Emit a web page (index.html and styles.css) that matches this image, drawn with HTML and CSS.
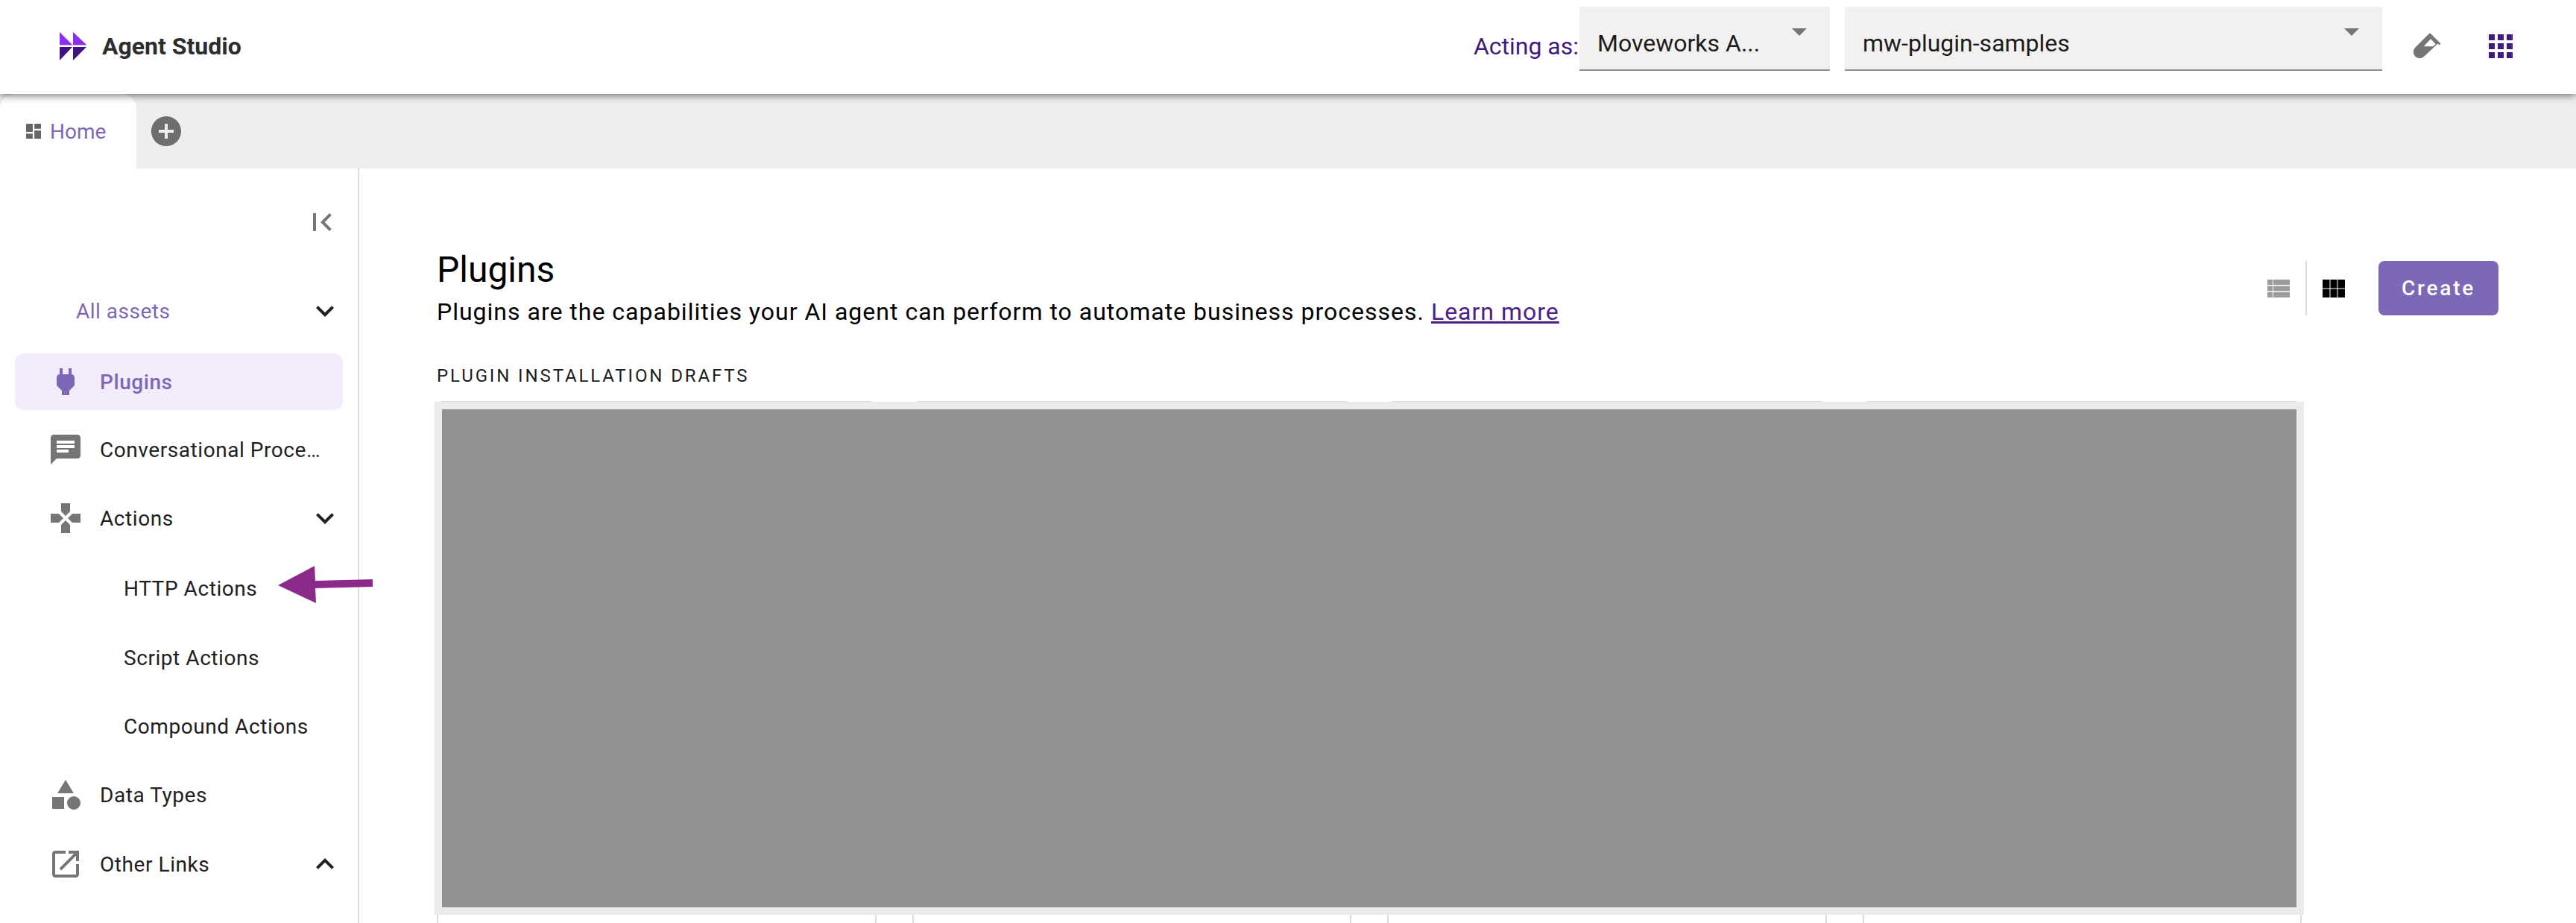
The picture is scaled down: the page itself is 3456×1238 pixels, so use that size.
FILE: index.html
```html
<!DOCTYPE html>
<html lang="en">
<head>
    <meta charset="UTF-8">
    <meta name="viewport" content="width=device-width, initial-scale=1.0">
    <title>Agent Studio</title>
    <link rel="stylesheet" href="styles.css">
</head>
<body>
    <!-- Top bar -->
    <header class="topbar">
        <div class="brand">
            <svg class="brand-logo" viewBox="0 0 36 38">
                <path fill="#8a2eef" d="M0 0l17 17H0zM18 0l18 17H18z"/>
                <path fill="#c9a6f7" d="M0 17h36v1H0z"/>
                <path fill="#3f1480" d="M0 20h17L0 38zM18 20h18L18 38z"/>
            </svg>
            <span class="brand-name">Agent Studio</span>
        </div>
        <div class="topbar-right">
            <span class="acting-label">Acting as:</span>
            <div class="select select-org">
                <span>Moveworks A...</span>
                <svg class="select-arrow" viewBox="0 0 20 10"><path d="M0 0h20L10 10z"/></svg>
            </div>
            <div class="select select-workspace">
                <span>mw-plugin-samples</span>
                <svg class="select-arrow" viewBox="0 0 20 10"><path d="M0 0h20L10 10z"/></svg>
            </div>
            <svg class="tube-icon" viewBox="0 0 38 38">
                <path fill="#757575" d="M23.500.5l14 14-2 2-2-2L15 32a8.500 8.500 0 0 1-12-12L21.500 1.500z"/>
                <path fill="#fff" d="M14.700 18.300L24 8.300l6.700 6.700-3.400 3.300z"/>
            </svg>
            <svg class="apps-icon" viewBox="0 0 32 32">
                <path fill="#3f1a80" d="M0 0h8v8H0zM12 0h8v8h-8zM24 0h8v8h-8zM0 12h8v8H0zM12 12h8v8h-8zM24 12h8v8h-8zM0 24h8v8H0zM12 24h8v8h-8zM24 24h8v8h-8z"/>
            </svg>
        </div>
    </header>

    <!-- Tabs -->
    <div class="tabbar">
        <div class="tab">
            <svg class="tab-icon" viewBox="3 3 18 18"><path d="M3 13h8V3H3v10zm0 8h8v-6H3v6zm10 0h8V11h-8v10zm0-18v6h8V3h-8z"/></svg>
            <span>Home</span>
        </div>
        <svg class="add-tab" viewBox="2 2 20 20"><path d="M12 2C6.480 2 2 6.480 2 12s4.480 10 10 10 10-4.480 10-10S17.520 2 12 2zm5 11h-4v4h-2v-4H7v-2h4V7h2v4h4v2z"/></svg>
    </div>

    <div class="layout">
        <!-- Sidebar -->
        <aside class="sidebar">
            <div class="collapse-row">
                <svg class="icon" viewBox="0 0 24 24"><path d="M18.410 16.590L13.820 12l4.590-4.590L17 6l-6 6 6 6zM6 6h2v12H6z"/></svg>
            </div>
            <div class="assets-row">
                <span>All assets</span>
                <svg class="chevron" viewBox="0 0 24 24"><path d="M16.590 8.590L12 13.170 7.410 8.590 6 10l6 6 6-6z"/></svg>
            </div>
            <nav>
                <div class="nav-row">
                    <div class="nav-item active">
                        <svg class="icon" viewBox="0 0 24 24"><path d="M16.010 7L16 3h-2v4h-4V3H8v4h-.01C7 6.990 6 7.990 6 8.990v5.490L9.500 18v3h5v-3l3.500-3.510v-5.500c0-1-1-2-1.990-1.990z"/></svg>
                        <span class="nav-text">Plugins</span>
                    </div>
                </div>
                <div class="nav-row short">
                    <div class="nav-item">
                        <svg class="icon" viewBox="0 0 24 24"><path d="M20 2H4c-1.100 0-1.990.9-1.990 2L2 22l4-4h14c1.100 0 2-.9 2-2V4c0-1.100-.9-2-2-2zM6 9h12v2H6V9zm8 5H6v-2h8v2zm4-6H6V6h12v2z"/></svg>
                        <span class="nav-text">Conversational Proce…</span>
                    </div>
                </div>
                <div class="nav-row tall">
                    <div class="nav-item">
                        <svg class="icon" viewBox="0 0 24 24"><path d="M15 7.500V2H9v5.500l3 3 3-3zM7.500 9H2v6h5.500l3-3-3-3zM9 16.500V22h6v-5.500l-3-3-3 3zM16.500 9l-3 3 3 3H22V9h-5.500z"/></svg>
                        <span class="nav-text">Actions</span>
                        <svg class="chevron" viewBox="0 0 24 24"><path d="M16.590 8.590L12 13.170 7.410 8.590 6 10l6 6 6-6z"/></svg>
                    </div>
                </div>
                <div class="nav-row tall"><div class="nav-item sub"><span class="nav-text">HTTP Actions</span></div></div>
                <div class="nav-row"><div class="nav-item sub"><span class="nav-text">Script Actions</span></div></div>
                <div class="nav-row"><div class="nav-item sub"><span class="nav-text">Compound Actions</span></div></div>
                <div class="nav-row">
                    <div class="nav-item">
                        <svg class="icon" viewBox="0 0 24 24"><path d="M12 2l-5.500 9h11zM3 13.500h8v8H3z"/><circle cx="17.500" cy="17.500" r="4.500"/></svg>
                        <span class="nav-text">Data Types</span>
                    </div>
                </div>
                <div class="nav-row tall">
                    <div class="nav-item">
                        <svg class="icon" viewBox="0 0 24 24"><path d="M19 19H5V5h7V3H5c-1.110 0-2 .9-2 2v14c0 1.100.89 2 2 2h14c1.100 0 2-.9 2-2v-7h-2v7zM14 3v2h3.590l-9.830 9.830 1.410 1.410L19 6.410V10h2V3h-7z"/></svg>
                        <span class="nav-text">Other Links</span>
                        <svg class="chevron" viewBox="0 0 24 24"><path d="M12 8l-6 6 1.410 1.410L12 10.830l4.590 4.580L18 14z"/></svg>
                    </div>
                </div>
            </nav>
            <!-- Callout arrow from the docs screenshot -->
            <svg class="callout-arrow" viewBox="0 0 127 50">
                <path fill="#8b2a8b" d="M0 26L49 0l1 20 77-2v10l-77 2 1 20z"/>
            </svg>
        </aside>

        <!-- Main content -->
        <main class="content">
            <div class="content-head">
                <div>
                    <h1 class="page-title">Plugins</h1>
                    <p class="page-desc">Plugins are the capabilities your AI agent can perform to automate business processes. <a href="#">Learn more</a></p>
                </div>
                <div class="head-actions">
                    <svg class="view-icon" viewBox="0 0 30 24">
                        <path fill="#9b9b9b" d="M0 0h7v7H0zM8 0h22v7H8zM0 8.500h7v7H0zM8 8.500h22v7H8zM0 17h7v7H0zM8 17h22v7H8z"/>
                    </svg>
                    <span class="view-divider"></span>
                    <svg class="view-icon" viewBox="0 0 30 24">
                        <path d="M0 0h9.500v11.500H0zM10.500 0h9v11.500h-9zM20.500 0H30v11.500h-9.500zM0 12.500h9.500V24H0zM10.500 12.500h9V24h-9zM20.500 12.500H30V24h-9.500z"/>
                    </svg>
                    <button class="create-btn">Create</button>
                </div>
            </div>
            <h2 class="section-label">PLUGIN INSTALLATION DRAFTS</h2>
            <div class="drafts">
                <div class="draft-card"></div>
                <div class="draft-card"></div>
                <div class="draft-card"></div>
                <div class="draft-card"></div>
                <!-- Redacted block over the cards -->
                <div class="drafts-cover"><div class="drafts-fill"></div></div>
            </div>
        </main>
    </div>
</body>
</html>
```

FILE: styles.css
```css
html, body {
    margin: 0;
    height: 1238px;
    overflow: hidden;
    background-color: white;
    font-family: Roboto, Arial, sans-serif;
}

/* Top bar */
.topbar {
    position: relative;
    z-index: 2;
    height: 126px;
    box-sizing: border-box;
    padding: 9px 85px 0 80px;
    display: flex;
    justify-content: space-between;
    background-color: white;
    box-shadow: 0 2px 10px rgba(0, 0, 0, 0.55);
}

.brand {
    display: flex;
    align-items: center;
    height: 124px;
    margin-top: -9px;
}

.brand-logo {
    width: 36px;
    height: 38px;
    margin-right: 21px;
}

.brand-name {
    font-size: 32px;
    font-weight: 700;
    color: #2d2d2d;
}

.topbar-right {
    display: flex;
    align-items: flex-start;
}

.acting-label {
    font-size: 32px;
    color: #3f1a80;
    line-height: 86px;
    margin-right: 1px;
    padding-top: 10px;
}

.select {
    height: 86px;
    box-sizing: border-box;
    padding: 0 31px 0 24px;
    display: flex;
    align-items: center;
    justify-content: space-between;
    background-color: #f2f1ef;
    border-bottom: 2px solid #8e8e8e;
    font-size: 32px;
    color: #1c1c1c;
}

.select span {
    margin-top: 13px;
}

.select-org {
    width: 336px;
    margin-right: 20px;
}

.select-workspace {
    width: 721px;
}

.select-arrow {
    width: 20px;
    height: 10px;
    margin-top: -16px;
    fill: #757575;
}

.tube-icon {
    width: 38px;
    height: 38px;
    margin: 35px 0 0 41px;
}

.apps-icon {
    width: 32px;
    height: 32px;
    margin: 37px 0 0 64px;
}

/* Tabs */
.tabbar {
    height: 100px;
    display: flex;
    align-items: center;
    background-color: #eeeeee;
}

.tab {
    width: 183px;
    height: 100px;
    box-sizing: border-box;
    padding-left: 35px;
    display: flex;
    align-items: center;
    gap: 12px;
    background-color: white;
    border-radius: 20px 20px 0 0;
    font-size: 28px;
    color: #7d68b7;
}

.tab-icon {
    width: 20px;
    height: 20px;
    fill: #666666;
}

.add-tab {
    width: 40px;
    height: 40px;
    margin-left: 20px;
    fill: #6e6e6e;
}

/* Page layout */
.layout {
    display: flex;
    height: 1012px;
    overflow: hidden;
}

.sidebar {
    position: relative;
    width: 482px;
    flex-shrink: 0;
    box-sizing: border-box;
    border-right: 2px solid #dddddd;
}

.icon {
    width: 48px;
    height: 48px;
    flex-shrink: 0;
    fill: #757575;
}

.chevron {
    width: 48px;
    height: 48px;
    flex-shrink: 0;
    fill: #212121;
}

.collapse-row {
    height: 94px;
    padding: 48px 24px 0 0;
    box-sizing: border-box;
    display: flex;
    justify-content: flex-end;
}

.assets-row {
    height: 146px;
    box-sizing: border-box;
    padding: 48px 20px 0 102px;
    display: flex;
    align-items: center;
    justify-content: space-between;
    font-size: 28px;
    letter-spacing: 0.5px;
    color: #7d68b7;
}

.nav-row {
    height: 92px;
    padding: 8px 20px;
    box-sizing: border-box;
    display: flex;
}

.nav-row.short {
    height: 90px;
}

.nav-row.tall {
    height: 94px;
}

.nav-item {
    flex: 1;
    min-width: 0;
    padding-left: 44px;
    padding-right: 0;
    display: flex;
    align-items: center;
    border-radius: 12px;
    font-size: 28px;
    letter-spacing: 0.56px;
    color: #212121;
}

.nav-item.sub {
    padding-left: 146px;
}

.nav-item.active {
    background-color: #f3ecfc;
    color: #7d68b7;
    font-weight: 500;
}

.nav-item.active .icon {
    fill: #7d68b7;
}

.nav-text {
    flex: 1;
    margin-left: 22px;
    white-space: nowrap;
}

.nav-item.sub .nav-text {
    margin-left: 0;
}

.callout-arrow {
    position: absolute;
    left: 373px;
    top: 533px;
    width: 127px;
    height: 50px;
}

/* Main content */
.content {
    flex: 1;
    padding: 106px 104px 0 104px;
    min-width: 0;
}

.content-head {
    display: flex;
    justify-content: space-between;
    align-items: flex-start;
}

.page-title {
    margin: 0;
    font-size: 48px;
    font-weight: 400;
    line-height: 60px;
    color: black;
}

.page-desc {
    margin: 4px 0 0;
    font-size: 32px;
    line-height: 44px;
    letter-spacing: 1px;
    color: black;
}

.page-desc a {
    color: #4b2087;
}

.head-actions {
    display: flex;
    align-items: center;
    margin-top: 18px;
}

.view-icon {
    width: 30px;
    height: 24px;
}

.view-divider {
    width: 2px;
    height: 73px;
    margin: 0 21px;
    background-color: #dddddd;
}

.create-btn {
    width: 161px;
    height: 73px;
    margin-left: 45px;
    border: none;
    border-radius: 8px;
    background-color: #7d68b7;
    color: white;
    font-family: Roboto, Arial, sans-serif;
    font-size: 28px;
    font-weight: 500;
    letter-spacing: 2.800px;
    cursor: pointer;
}

.section-label {
    margin: 48px 0 0;
    font-size: 24px;
    font-weight: 400;
    line-height: 32px;
    letter-spacing: 2.880px;
    color: #1c1c1c;
}

.drafts {
    position: relative;
    width: 2502px;
    height: 760px;
    margin-top: 18px;
    display: grid;
    grid-template-columns: repeat(4, 1fr);
    gap: 48px;
}

.draft-card {
    box-sizing: border-box;
    border: 2px solid #dddddd;
    border-radius: 8px;
}

.drafts-cover {
    position: absolute;
    top: 1px;
    left: -3px;
    width: 2508px;
    height: 688px;
    box-sizing: border-box;
    padding: 10px;
    background-color: #ebebeb;
}

.drafts-fill {
    height: 100%;
    background-color: #919191;
}
```
